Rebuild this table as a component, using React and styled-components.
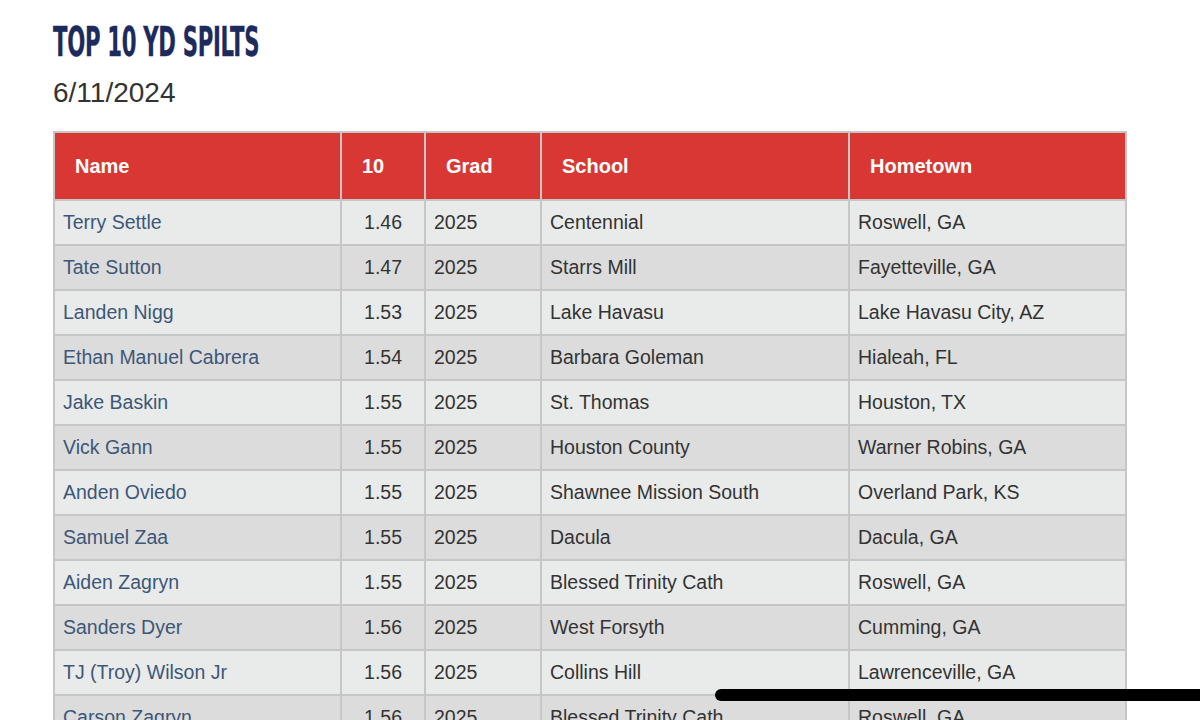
import React from "react";
import styled, { createGlobalStyle } from "styled-components";

const Global = createGlobalStyle`
  html, body { margin: 0; padding: 0; background: #ffffff; }
  body { font-family: "Liberation Sans", Arial, sans-serif; overflow: hidden; }
`;

const Page = styled.div`
  position: relative;
  width: 1200px;
  height: 720px;
  overflow: hidden;
  padding: 22px 0 0 53px;
  box-sizing: border-box;
`;

const Title = styled.h1`
  margin: 0;
  font-family: "DejaVu Sans Condensed", "Liberation Sans", sans-serif;
  font-stretch: condensed;
  font-weight: 700;
  font-size: 41px;
  line-height: 40px;
  color: #1c2a5c;
  letter-spacing: -0.5px;
  transform-origin: left center;
  transform: scaleX(0.575);
  -webkit-text-stroke: 0.3px #1c2a5c;
  white-space: nowrap;
`;

const DateLine = styled.div`
  margin-top: 15px;
  font-size: 28px;
  line-height: 32px;
  color: #333333;
`;

const Table = styled.table`
  margin-top: 22px;
  border-collapse: collapse;
  width: 1072px;
  table-layout: fixed;
  font-size: 19.5px;
  color: #333333;
`;

const Th = styled.th`
  background: #d93733;
  color: #ffffff;
  font-weight: 700;
  font-size: 20px;
  text-align: left;
  height: 68px;
  padding: 0 20px;
  border: 2px solid #c6c6c6;
  box-sizing: border-box;
`;

const Row = styled.tr`
  background: ${(p) => (p.$alt ? "#dcdcdc" : "#e9ebeb")};
`;

const Td = styled.td`
  height: 45px;
  padding: 0 ${(p) => (p.$num ? "22px" : "8px")} 0 8px;
  text-align: ${(p) => (p.$num ? "right" : "left")};
  border: 2px solid #c6c6c6;
  color: ${(p) => (p.$link ? "#3c5777" : "#333333")};
  white-space: nowrap;
  overflow: hidden;
  box-sizing: border-box;
`;

const HomeBar = styled.div`
  position: absolute;
  left: 715px;
  top: 689px;
  width: 520px;
  height: 12px;
  border-radius: 6px;
  background: #000000;
`;

const rows = [
  ["Terry Settle", "1.46", "2025", "Centennial", "Roswell, GA"],
  ["Tate Sutton", "1.47", "2025", "Starrs Mill", "Fayetteville, GA"],
  ["Landen Nigg", "1.53", "2025", "Lake Havasu", "Lake Havasu City, AZ"],
  ["Ethan Manuel Cabrera", "1.54", "2025", "Barbara Goleman", "Hialeah, FL"],
  ["Jake Baskin", "1.55", "2025", "St. Thomas", "Houston, TX"],
  ["Vick Gann", "1.55", "2025", "Houston County", "Warner Robins, GA"],
  ["Anden Oviedo", "1.55", "2025", "Shawnee Mission South", "Overland Park, KS"],
  ["Samuel Zaa", "1.55", "2025", "Dacula", "Dacula, GA"],
  ["Aiden Zagryn", "1.55", "2025", "Blessed Trinity Cath", "Roswell, GA"],
  ["Sanders Dyer", "1.56", "2025", "West Forsyth", "Cumming, GA"],
  ["TJ (Troy) Wilson Jr", "1.56", "2025", "Collins Hill", "Lawrenceville, GA"],
  ["Carson Zagryn", "1.56", "2025", "Blessed Trinity Cath", "Roswell, GA"],
];

export default function App() {
  return (
    <>
      <Global />
      <Page>
        <Title>TOP 10 YD SPILTS</Title>
        <DateLine>6/11/2024</DateLine>
        <Table>
          <colgroup>
            <col style={{ width: 287 }} />
            <col style={{ width: 84 }} />
            <col style={{ width: 116 }} />
            <col style={{ width: 308 }} />
            <col style={{ width: 277 }} />
          </colgroup>
          <thead>
            <tr>
              <Th>Name</Th>
              <Th>10</Th>
              <Th>Grad</Th>
              <Th>School</Th>
              <Th>Hometown</Th>
            </tr>
          </thead>
          <tbody>
            {rows.map((r, i) => (
              <Row key={i} $alt={i % 2 === 1}>
                <Td $link>{r[0]}</Td>
                <Td $num>{r[1]}</Td>
                <Td>{r[2]}</Td>
                <Td>{r[3]}</Td>
                <Td>{r[4]}</Td>
              </Row>
            ))}
          </tbody>
        </Table>
        <HomeBar />
      </Page>
    </>
  );
}
